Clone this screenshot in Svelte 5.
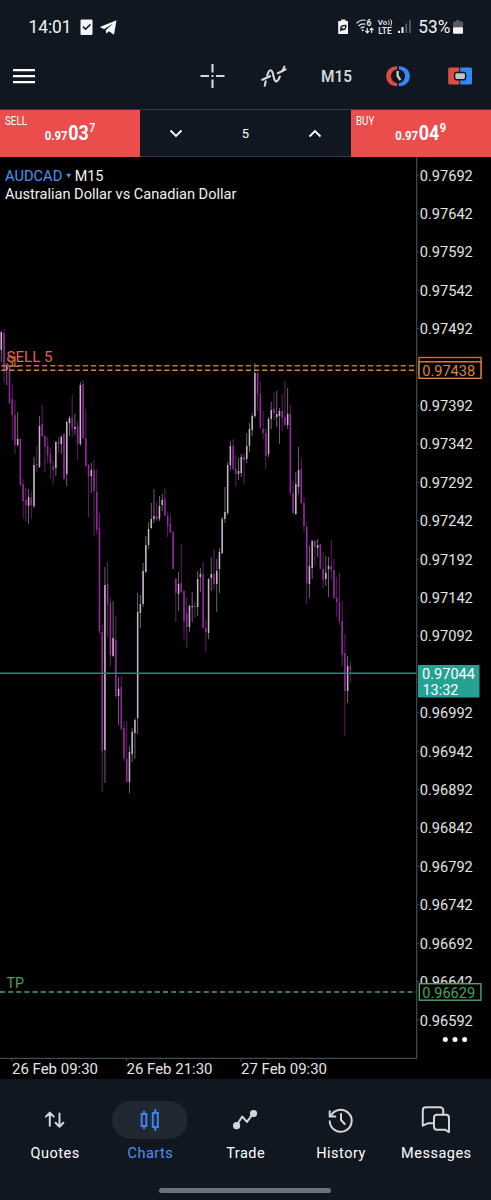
<script>
  // Each candle: high, low, body top, body bottom, colour (1 = rising).
  const candles = [
    [331,362,332,350,1],[329,383,333,370,0],[363,385,366,370,1],[366,404,367,403,0],[384,440,399,415,0],[400,454,415,445,0],[412,446,439,445,1],[438,486,439,485,0],
    [479,519,484,501,0],[488,522,500,505,0],[489,524,497,506,1],[492,519,498,505,0],[457,508,465,506,1],[446,472,464,465,0],[416,468,426,467,1],[405,437,424,436,0],
    [435,472,436,447,0],[437,463,446,455,0],[448,478,454,463,0],[460,485,466,470,0],[441,476,442,468,1],[437,453,442,444,0],[435,454,437,444,1],[433,480,434,479,0],
    [421,486,422,474,1],[416,436,418,423,1],[395,437,418,428,0],[414,435,427,429,1],[421,460,426,444,0],[382,446,385,444,1],[380,439,384,438,0],[409,467,438,466,0],
    [464,517,465,477,0],[463,493,470,476,1],[460,536,470,491,0],[469,534,492,530,0],[513,634,528,631,0],[624,792,632,751,0],[567,783,585,750,1],[562,637,584,604,0],
    [598,666,603,655,0],[601,657,638,656,1],[616,698,640,696,0],[677,725,689,696,1],[676,730,687,729,0],[721,761,728,758,0],[721,782,759,782,0],[746,793,752,782,1],
    [728,762,732,754,1],[718,759,720,733,1],[593,734,612,718,1],[595,628,604,613,1],[563,607,571,604,1],[536,573,545,572,1],[522,549,529,545,1],[503,529,519,528,1],
    [489,523,516,519,1],[502,521,516,519,0],[496,521,506,519,1],[494,511,500,505,1],[488,516,499,516,0],[512,537,516,526,0],[514,533,524,533,0],[531,569,532,569,0],
    [578,622,579,593,0],[572,611,584,594,1],[544,593,583,592,0],[590,639,591,621,0],[597,648,613,627,0],[605,632,606,627,1],[592,622,606,607,1],[602,618,606,607,0],
    [571,616,579,607,1],[568,592,574,577,1],[562,629,574,628,0],[619,652,628,632,0],[578,639,579,633,1],[557,591,574,578,1],[549,590,574,584,0],[559,612,571,584,1],
    [548,593,552,569,1],[517,554,519,553,1],[487,523,512,519,1],[462,515,465,513,1],[441,470,446,465,1],[439,470,446,469,0],[455,487,469,474,0],[458,480,471,474,1],
    [454,477,457,473,1],[453,484,457,460,0],[433,463,446,459,1],[423,452,429,446,1],[413,436,416,430,1],[363,418,373,416,1],[372,411,373,394,0],[382,429,394,428,0],
    [411,439,429,433,0],[428,469,433,456,0],[417,457,419,454,1],[402,429,410,419,1],[392,420,409,413,0],[391,427,414,417,1],[408,444,411,416,1],[394,431,411,418,0],
    [381,426,417,425,0],[388,429,414,425,1],[405,495,414,493,0],[481,514,493,513,0],[472,515,484,514,1],[447,494,470,487,1],[458,504,469,503,0],[497,532,503,526,0],
    [522,604,527,583,0],[546,598,566,584,1],[540,579,541,568,1],[540,566,541,547,0],[539,557,545,548,1],[544,569,544,569,0],[552,588,569,580,0],[556,586,573,579,1],
    [557,597,566,569,1],[540,579,566,570,0],[559,599,570,598,0],[577,617,598,602,0],[573,625,602,621,0],[601,666,621,655,0],[634,736,653,691,0],[656,703,666,691,1],
    [661,683,666,670,0]
  ];
  const cx = (i) => 1.3 + 2.727 * i;

  const prices = Array.from({ length: 23 }, (_, i) => ({
    label: (0.97692 - i * 0.0005).toFixed(5),
    y: 175 + i * 38.41
  })).filter((p) => p.label !== '0.97442' && p.label !== '0.97042');

  const dates = [
    { x: 12, label: '26 Feb 09:30', w: 86 },
    { x: 126.5, label: '26 Feb 21:30', w: 86 },
    { x: 241, label: '27 Feb 09:30', w: 86 }
  ];
</script>

{#snippet fit(x, y, w, size, text, weight = 400, fill = '#fff')}
  <text {x} {y} textLength={w} lengthAdjust="spacingAndGlyphs" font-size={size} font-weight={weight} {fill}>{text}</text>
{/snippet}

<div class="app">
  <header>
    <div class="status">
      <svg width="125" height="30" viewBox="0 12 125 30">
        {@render fit(28.5, 32.5, 43, 18.3, '14:01', 400, '#f2f4f6')}
        <rect x="80.5" y="19.5" width="12" height="15.5" rx="1.2" fill="#f2f4f6" />
        <path d="M83 26.6l2.6 2.6 4.8-4.8" fill="none" stroke="#101720" stroke-width="1.5" />
        <path d="M99.8 27L116.5 20.2 114 34.8 108.8 31.2 106.4 33.8 105.7 30.2 113 23.6 104 29.2z" fill="#f2f4f6" />
      </svg>
      <svg width="155" height="30" viewBox="336 12 155 30">
        <path d="M341 19.5h4.6v1.4h2.4v13h-9.8v-13h2.8z" fill="#f2f4f6" />
        <path d="M340.8 29.6c-.6-3.8 1.8-4 5-4.2 0 3.2-1 4.8-3.6 4M340.3 31l2.8-2.8" fill="none" stroke="#101720" stroke-width="1.4" />
        <g fill="none" stroke="#e8eaed" stroke-width="1.2">
          <path d="M356.5 23.3c2.6-2.8 6.4-3.7 9-3M358.5 26c2-2 4.8-2.6 7-1.8M360.5 28.4c1.3-1.2 2.8-1.5 4.2-1.2" />
          <path d="M367.3 28v4.8M365.4 30.8l1.9 2 1.9-2M371.6 33v-4.8M369.7 30.2l1.9-2 1.9 2" />
        </g>
        <circle cx="362.7" cy="30.2" r="1" fill="#e8eaed" />
        {@render fit(366.6, 26.4, 4.9, 8.6, '6', 700, '#e8eaed')}
        {@render fit(377.8, 25.4, 9.4, 7.8, 'Vo', 600, '#e8eaed')}
        <path d="M388.4 20.3c1 1.3 1 3.5 0 4.8M390.4 19.3c1.6 1.8 1.6 5 0 6.8" fill="none" stroke="#e8eaed" stroke-width="1" />
        {@render fit(378.2, 33.8, 13.5, 9.2, 'LTE', 600, '#e8eaed')}
        <path d="M399 33v-2.2M402.5 33v-6" stroke="#f2f4f6" stroke-width="2" />
        <path d="M406.3 33v-9.5M410 33v-13" stroke="#59616a" stroke-width="1.7" />
        {@render fit(418.3, 32.6, 32, 18.5, '53%', 400, '#f2f4f6')}
        <path d="M456 20h3.5v1.5h3.5v6h-10v-6h3z" fill="#555b62" />
        <rect x="453" y="27.3" width="10" height="6.5" rx="1" fill="#f2f4f6" />
      </svg>
    </div>
    <div class="tools">
      <svg width="24" height="18" viewBox="0 0 24 18"><path d="M1 3.2h22M1 9.2h22M1 15.2h22" stroke="#fff" stroke-width="2.3" /></svg>
      <svg class="cross" width="26" height="26" viewBox="0 0 26 26"><path d="M13.5 1v8.5M13.5 16.5V25M1.5 13h8.5M17 13h8.5M12.5 13h2" stroke="#d7d9dc" stroke-width="2.1" /></svg>
      <svg width="28" height="26" viewBox="260 63 28 26"><g fill="none" stroke="#d7d9dc" stroke-width="2.1" stroke-linecap="round" stroke-linejoin="round"><path d="M264.8 85.6l.9-4.4M267.2 75.8c.8-3.2 1.8-5.6 3.4-5.6 3.4 0 2.2 11.2 5.6 11.2 1.7 0 2.6-2.2 3.6-4.8M282.2 71.2l2.2-4.6" /><path d="M262.3 79.8l7.8-3.6M277.8 73.2l7.8-3.8" /></g></svg>
      <svg width="34" height="22" viewBox="319 65 34 22">{@render fit(321, 82.2, 31, 17.2, 'M15', 600, '#d4d6d9')}</svg>
      <svg width="26" height="26" viewBox="385 63 26 26"><path d="M397.2 66.2c-7 0-11 4.4-11 10s4 10 11 10z" fill="#e04b42" /><path d="M398.8 66.2c7 0 11 4.4 11 10s-4 10-11 10z" fill="#3488f5" /><circle cx="398" cy="76.2" r="7" fill="#101720" /><path d="M397.6 71v5l2.8 4" fill="none" stroke="#cfd2d6" stroke-width="2.2" /></svg>
      <svg width="26" height="20" viewBox="447 66 26 20"><path d="M459.2 67.5h-9.5a1.5 1.5 0 0 0-1.5 1.5v14a1.5 1.5 0 0 0 1.5 1.5h9.5z" fill="#e04b42" /><path d="M460.2 67.5h10.3a1.5 1.5 0 0 1 1.5 1.5v14a1.5 1.5 0 0 1-1.5 1.5h-10.3z" fill="#3488f5" /><rect x="454.6" y="72.5" width="11" height="7.2" rx="2" fill="#bfc3c8" stroke="#101720" stroke-width="1.4" /></svg>
    </div>
  </header>

  <section class="deal">
    <svg class="side" width="140" height="48" viewBox="0 109 140 48">
      {@render fit(5, 124.7, 22, 12, 'SELL')}
      {@render fit(44.7, 140, 23, 13.2, '0.97', 700)}
      {@render fit(68.2, 140, 20.5, 21, '03', 700)}
      {@render fit(89.2, 132, 6, 12.5, '7', 600)}
    </svg>
    <div class="volume">
      <svg width="14" height="9" viewBox="0 0 14 9"><path d="M1.5 1.5L7 7l5.5-5.5" /></svg>
      <span>5</span>
      <svg width="14" height="9" viewBox="0 0 14 9"><path d="M1.5 7.5L7 2l5.5 5.5" /></svg>
    </div>
    <svg class="side" width="140" height="48" viewBox="351 109 140 48">
      {@render fit(356, 124.7, 18.3, 12, 'BUY')}
      {@render fit(395.2, 140, 23, 13.2, '0.97', 700)}
      {@render fit(418.7, 140, 20.5, 21, '04', 700)}
      {@render fit(439.7, 132, 6.4, 12.5, '9', 700)}
    </svg>
  </section>

  <svg class="chart" width="491" height="922" viewBox="0 157 491 922">
    <g stroke-width="1">
      {#each candles as [h, l, t, b, up], i}
        <path d="M{cx(i)} {h}V{l}" stroke={up ? '#6b646c' : '#612066'} />
        <rect x={cx(i) - 0.75} y={t} width="1.5" height={Math.max(1, b - t)} fill={up ? '#c9b4cc' : '#9a25a4'} />
      {/each}
    </g>
    <path d="M0 673.3H417" stroke="#26857c" stroke-width="1.4" />
    {@render fit(6.5, 366.6, 13, 15, 'SL', 400, '#d67f3c')}
    {@render fit(6.5, 361.8, 46, 15, 'SELL 5', 400, '#e4604f')}
    <path d="M0 365.8H416" stroke="#e65e4b" stroke-width="1.5" stroke-dasharray="5.1 3.05" stroke-dashoffset="6.8" />
    <path d="M0 370.3H416" stroke="#dc8440" stroke-width="1.5" stroke-dasharray="5.1 3.05" stroke-dashoffset="6.8" />
    {@render fit(6.6, 988.2, 17.5, 15, 'TP', 400, '#4ea058')}
    <path d="M0 992H416" stroke="#53a368" stroke-width="1.5" stroke-dasharray="5 3.15" />
    <path d="M416.7 157V1058.5M0 1058.3H417.2" fill="none" stroke="#454b52" stroke-width="1.2" />

    {#each prices as p}
      <path d="M417 {p.y}h2" stroke="#454b52" />
      {@render fit(419.8, p.y + 5.5, 53, 15.4, p.label, 400, '#e4e4e4')}
    {/each}

    <rect x="419" y="357.5" width="62" height="17" fill="#000" stroke="#e65e4b" stroke-width="1.4" />
    {@render fit(422.2, 372, 53, 15.4, '0.97444', 400, '#e65e4b')}
    <rect x="419" y="361.8" width="62" height="16.5" fill="#000" stroke="#dc8440" stroke-width="1.4" />
    {@render fit(422.2, 375.6, 53, 15.4, '0.97438', 400, '#dc8440')}
    <rect x="418" y="665" width="61.5" height="32.5" fill="#26a294" />
    {@render fit(422, 678.6, 53, 15.4, '0.97044')}
    {@render fit(422.5, 694.6, 36, 15.4, '13:32')}
    <rect x="419.3" y="983.7" width="61.6" height="16.5" fill="#000" stroke="#53a368" stroke-width="1.4" />
    {@render fit(422.2, 997.6, 53, 15.4, '0.96629', 400, '#4ea058')}

    <g fill="#fff"><circle cx="445.3" cy="1039.6" r="2.5" /><circle cx="455" cy="1039.6" r="2.5" /><circle cx="464.6" cy="1039.6" r="2.5" /></g>
    {#each dates as d}
      <path d="M{d.x} 1058v3" stroke="#454b52" />
      {@render fit(d.x, 1073.8, d.w, 15, d.label, 400, '#e4e4e4')}
    {/each}

    {@render fit(5, 181.1, 57.3, 15.4, 'AUDCAD', 400, '#4d92f5')}
    <path d="M66.1 173.8h5l-2.5 4.2z" fill="#4d92f5" />
    {@render fit(74.7, 181.1, 28.8, 15.4, 'M15', 400, '#f2f2f2')}
    {@render fit(5, 198.8, 231.5, 15, 'Australian Dollar vs Canadian Dollar', 400, '#f2f2f2')}
  </svg>

  <nav>
    <div class="item">
      <span class="pill"><svg width="32" height="32" viewBox="39 1104 32 32"><path d="M49.8 1125.7v-13M45.9 1116.6l3.9-4 3.9 4M59.5 1113.5v13M55.6 1122.8l3.9 4 3.9-4" /></svg></span>
      <span>Quotes</span>
    </div>
    <div class="item active">
      <span class="pill"><svg width="32" height="32" viewBox="134.5 1104 32 32"><path d="M144.5 1111v3M144.5 1126v3M155.8 1109v4M155.8 1127v4" /><rect x="142.2" y="1114" width="4.6" height="12" /><rect x="153.3" y="1113" width="5" height="14" /></svg></span>
      <span>Charts</span>
    </div>
    <div class="item">
      <span class="pill"><svg width="32" height="32" viewBox="229.7 1104 32 32"><path d="M237.3 1125.5l5.6-9 4.7 5.4 6.2-8.2" /><circle cx="237.3" cy="1125.7" r="2.6" fill="#d3d5d8" /><circle cx="254.2" cy="1113.5" r="2.6" fill="#d3d5d8" /></svg></span>
      <span>Trade</span>
    </div>
    <div class="item">
      <span class="pill"><svg width="32" height="32" viewBox="325 1104 32 32"><path d="M330.6 1116.4a11 11 0 1 1-.9 4.9M329.7 1111.2v5.4h5.6M341 1114v6l3.7 4" /></svg></span>
      <span>History</span>
    </div>
    <div class="item">
      <span class="pill"><svg width="32" height="32" viewBox="420 1104 32 32"><path d="M433.5 1123.3h-5.7l-5 2.4v-15.4a3 3 0 0 1 3-3h14.4a3 3 0 0 1 3 3v4.3" /><path d="M437 1114.8h9a3 3 0 0 1 3 3v14.3l-3.5-2.3H437a3 3 0 0 1-3-3v-9a3 3 0 0 1 3-3z" /></svg></span>
      <span>Messages</span>
    </div>
    <div class="handle"></div>
  </nav>
</div>

<style>
  :global(body) { margin: 0; background: #101720; }
  .app { width: 491px; height: 1200px; overflow: hidden; display: flex; flex-direction: column; background: #101720; font-family: Roboto, sans-serif; color: #fff; }
  svg { display: block; flex: none; overflow: visible; }
  header { height: 109px; display: flex; flex-direction: column; }
  .status { display: flex; justify-content: space-between; padding-top: 12px; height: 30px; }
  .tools { display: flex; align-items: center; height: 68px; padding-left: 12px; }
  .cross { margin-left: 163px; margin-right: 35px; }
  .tools svg:nth-child(4) { margin-left: 31px; }
  .tools svg:nth-child(5) { margin-left: 32px; }
  .tools svg:nth-child(6) { margin-left: 36px; }
  .deal { display: grid; grid-template-columns: 140px 211px 140px; height: 48px; background: #000; }
  .side { background: linear-gradient(#343b43 0 1px, #ea4d4c 1px 47.5px, #000 47.5px); }
  .volume { box-sizing: border-box; height: 48px; display: flex; align-items: center; justify-content: space-between; padding: 1px 29px 0; border-top: 1px solid #343b43; border-bottom: 1px solid #343b43; background: #101720; font-size: 13px; }
  .volume svg path { fill: none; stroke: #fff; stroke-width: 1.8; }
  .chart { background: #000; overflow: hidden; }
  nav { height: 121px; display: grid; grid-template-columns: repeat(5, 95.3px); grid-template-rows: 109px 5px; padding-left: 7px; }
  .item { display: flex; flex-direction: column; align-items: center; padding-top: 22px; font-size: 14.5px; letter-spacing: .5px; line-height: 20px; }
  .item > span:last-child { padding-left: 1px; }
  .pill { width: 76px; height: 38px; border-radius: 19px; display: flex; align-items: center; justify-content: center; margin-bottom: 5px; }
  .pill svg { fill: none; stroke: #d3d5d8; stroke-width: 2; stroke-linecap: round; stroke-linejoin: round; }
  .active { color: #4d92f5; }
  .active .pill { background: #202832; }
  .active svg { stroke: #3e82f7; stroke-linecap: butt; stroke-linejoin: miter; }
  .handle { grid-column: 1 / -1; justify-self: center; width: 172px; height: 5px; border-radius: 3px; background: #6d7278; }
</style>
